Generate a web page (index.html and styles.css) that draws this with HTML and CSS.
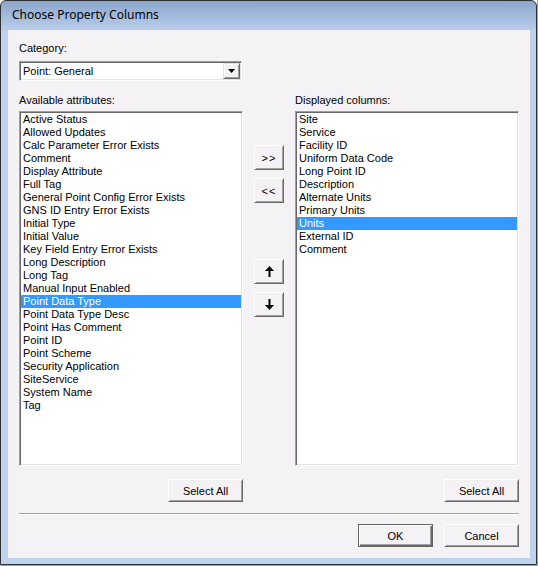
FILE: index.html
```html
<!DOCTYPE html>
<html>
<head>
<meta charset="utf-8">
<link rel="stylesheet" href="styles.css">
</head>
<body>
<div class="frame">
  <div class="window">
    <div class="titlebar"><span class="title">Choose Property Columns</span></div>
    <div class="client">
      <div class="label cat-label">Category:</div>
      <div class="combo">
        <span class="combo-text">Point: General</span>
        <span class="combo-btn"><svg width="7" height="4" viewBox="0 0 7 4"><polygon points="0,0 7,0 3.5,4" fill="#000"/></svg></span>
      </div>
      <div class="columns">
        <div class="col">
          <div class="label">Available attributes:</div>
          <ul class="listbox">
            <li>Active Status</li>
            <li>Allowed Updates</li>
            <li>Calc Parameter Error Exists</li>
            <li>Comment</li>
            <li>Display Attribute</li>
            <li>Full Tag</li>
            <li>General Point Config Error Exists</li>
            <li>GNS ID Entry Error Exists</li>
            <li>Initial Type</li>
            <li>Initial Value</li>
            <li>Key Field Entry Error Exists</li>
            <li>Long Description</li>
            <li>Long Tag</li>
            <li>Manual Input Enabled</li>
            <li class="selected">Point Data Type</li>
            <li>Point Data Type Desc</li>
            <li>Point Has Comment</li>
            <li>Point ID</li>
            <li>Point Scheme</li>
            <li>Security Application</li>
            <li>SiteService</li>
            <li>System Name</li>
            <li>Tag</li>
          </ul>
          <div class="col-foot"><button class="btn">Select All</button></div>
        </div>
        <div class="mid">
          <div class="btn-group">
            <button class="btn small">&gt;&gt;</button>
            <button class="btn small">&lt;&lt;</button>
          </div>
          <div class="btn-group move-group">
            <button class="btn small"><svg width="9" height="11" viewBox="0 0 9 11"><polygon points="4.5,0 9,5 0,5" fill="#000"/><rect x="3.5" y="5" width="2" height="6" fill="#000"/></svg></button>
            <button class="btn small"><svg width="9" height="11" viewBox="0 0 9 11"><rect x="3.5" y="0" width="2" height="6" fill="#000"/><polygon points="0,6 9,6 4.5,11" fill="#000"/></svg></button>
          </div>
        </div>
        <div class="col">
          <div class="label">Displayed columns:</div>
          <ul class="listbox">
            <li>Site</li>
            <li>Service</li>
            <li>Facility ID</li>
            <li>Uniform Data Code</li>
            <li>Long Point ID</li>
            <li>Description</li>
            <li>Alternate Units</li>
            <li>Primary Units</li>
            <li class="selected">Units</li>
            <li>External ID</li>
            <li>Comment</li>
          </ul>
          <div class="col-foot"><button class="btn">Select All</button></div>
        </div>
      </div>
      <div class="separator"></div>
      <div class="actions">
        <button class="btn default">OK</button>
        <button class="btn">Cancel</button>
      </div>
    </div>
  </div>
</div>
</body>
</html>
```
FILE: styles.css
```css
html, body {
  margin: 0;
  padding: 0;
  background: #ffffff;
}
.frame {
  width: 538px;
  height: 566px;
  box-sizing: border-box;
  border-right: 1px solid #3ccbe6;
  border-bottom: 1px solid #3ccbe6;
}
.window {
  width: 537px;
  height: 565px;
  box-sizing: border-box;
  border: 1px solid #2f3235;
  border-radius: 6px 6px 0 0;
  background: linear-gradient(to bottom, #8aa6cc 0px, #b9cdea 29px, #bfd3ef 30px, #bfd3ef 100%);
  padding: 0 6px 6px 7px;
  display: flex;
  flex-direction: column;
}
.titlebar {
  height: 29px;
  flex: none;
  box-sizing: border-box;
  padding: 4px 0 0 4px;
}
.title {
  font-family: "Noto Sans", "Open Sans", sans-serif;
  font-size: 12px;
  line-height: 20px;
  color: #000;
}
.client {
  flex: 1;
  background: #f5f2f5;
  padding: 12px 11px 0 11px;
  font-family: "Liberation Sans", Arial, sans-serif;
  font-size: 11px;
  color: #000;
}
.label {
  line-height: 13px;
  height: 13px;
  white-space: nowrap;
}
.combo {
  margin-top: 6px;
  width: 223px;
  height: 20px;
  box-sizing: border-box;
  background: #fff;
  border-top: 1px solid #a0a0a0;
  border-left: 1px solid #a0a0a0;
  border-right: 1px solid #fff;
  border-bottom: 1px solid #fff;
  box-shadow: inset 1px 1px 0 #696969, inset -1px -1px 0 #e3e3e3;
  display: flex;
  align-items: center;
  justify-content: space-between;
  padding: 1px 1px 1px 2px;
}
.combo-text {
  line-height: 13px;
  padding-left: 1px;
}
.combo-btn {
  width: 17px;
  height: 16px;
  box-sizing: border-box;
  background: #f5f2f5;
  border-top: 1px solid #e3e3e3;
  border-left: 1px solid #e3e3e3;
  border-right: 1px solid #696969;
  border-bottom: 1px solid #696969;
  box-shadow: inset 1px 1px 0 #fff, inset -1px -1px 0 #a0a0a0;
  display: flex;
  align-items: center;
  justify-content: center;
}
.combo-btn svg { display: block; }
.columns {
  margin-top: 13px;
  display: flex;
}
.col {
  width: 224px;
  display: flex;
  flex-direction: column;
}
.listbox {
  list-style: none;
  margin: 4px 0 0 0;
  padding: 0;
  height: 355px;
  box-sizing: border-box;
  background: #fff;
  border-top: 1px solid #a0a0a0;
  border-left: 1px solid #a0a0a0;
  border-right: 1px solid #fff;
  border-bottom: 1px solid #fff;
  box-shadow: inset 1px 1px 0 #696969, inset -1px -1px 0 #e3e3e3;
  padding: 1px;
}
.listbox li {
  height: 13px;
  line-height: 13px;
  padding-left: 2px;
  white-space: nowrap;
  overflow: hidden;
}
.listbox li.selected {
  background: #3399ff;
  color: #fff;
}
.col-foot {
  margin-top: 13px;
  display: flex;
  justify-content: flex-end;
}
.btn {
  width: 75px;
  height: 23px;
  box-sizing: border-box;
  margin: 0;
  padding: 0;
  font-family: "Liberation Sans", Arial, sans-serif;
  font-size: 11px;
  color: #000;
  background: #f5f2f5;
  border-top: 1px solid #fff;
  border-left: 1px solid #fff;
  border-right: 1px solid #696969;
  border-bottom: 1px solid #696969;
  box-shadow: inset 1px 1px 0 #f0f0f0, inset -1px -1px 0 #a0a0a0;
  display: flex;
  align-items: center;
  justify-content: center;
}
.btn svg { display: block; }
.btn.default {
  border: 1px solid #646464;
  box-shadow: inset 1px 1px 0 #fff, inset -1px -1px 0 #696969, inset -2px -2px 0 #a0a0a0;
}
.mid {
  width: 52px;
  display: flex;
  flex-direction: column;
  align-items: center;
  padding-top: 51px;
}
.btn-group {
  display: flex;
  flex-direction: column;
  gap: 8px;
}
.move-group {
  margin-top: 56px;
}
.btn.small {
  width: 30px;
  height: 25px;
  letter-spacing: 1px;
}
.separator {
  margin-top: 11px;
  height: 1px;
  border-top: 1px solid #a0a0a0;
  background: #fff;
}
.actions {
  margin-top: 9px;
  display: flex;
  justify-content: flex-end;
  gap: 11px;
}
```
